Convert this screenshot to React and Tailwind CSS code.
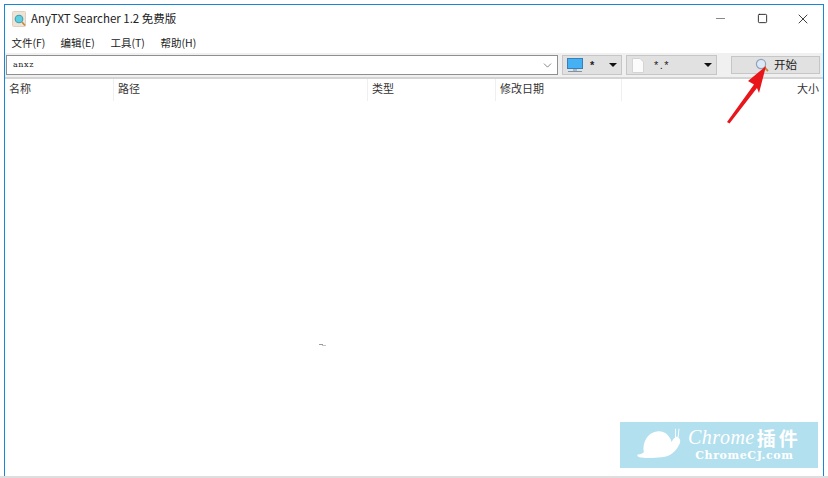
import React from "react";
import { ChevronDown, Square, X } from "lucide-react";

const cjk = "font-['Noto_Sans_CJK_SC','Noto_Sans',sans-serif]";

const menus = [
  { label: "文件(F)", width: "w-[49px]" },
  { label: "编辑(E)", width: "w-[50px]" },
  { label: "工具(T)", width: "w-[50px]" },
  { label: "帮助(H)", width: "w-[60px]" },
];

const columns = [
  { label: "名称", width: "w-[109px]", align: "" },
  { label: "路径", width: "w-[254px]", align: "" },
  { label: "类型", width: "w-[128px]", align: "" },
  { label: "修改日期", width: "w-[126px]", align: "" },
  { label: "大小", width: "flex-1", align: "text-right" },
];

function AppIcon() {
  return (
    <svg width="15" height="16" viewBox="0 0 15 16" className="shrink-0">
      <rect x="0.5" y="0.5" width="13" height="15" rx="1" fill="#efe3d6" stroke="#e0d0bf" />
      <circle cx="7" cy="8" r="3.8" fill="#5cd0e0" stroke="#3f9db5" strokeWidth="1.1" />
      <path d="M10 11 L13 14.5" stroke="#c48a3c" strokeWidth="1.6" />
    </svg>
  );
}

function MonitorIcon() {
  return (
    <svg width="16" height="15" viewBox="0 0 16 15" className="shrink-0">
      <rect x="0.5" y="0.5" width="15" height="10" fill="#45b1f5" stroke="#3a7fb5" />
      <rect x="6" y="11" width="4" height="2" fill="#a9b8c4" />
      <rect x="1" y="13" width="14" height="1" fill="#7d93a6" />
    </svg>
  );
}

function PageIcon() {
  return (
    <svg width="12" height="15" viewBox="0 0 12 15" className="shrink-0">
      <path d="M0.5 0.5 H8 L11.5 4 V14.5 H0.5 Z" fill="#fbfbfb" stroke="#d4d4d4" />
    </svg>
  );
}

function Caret() {
  return (
    <svg width="8" height="4" viewBox="0 0 8 4" className="shrink-0">
      <path d="M0 0 H8 L4 4 Z" fill="#111" />
    </svg>
  );
}

function Watermark() {
  return (
    <div className="absolute left-[620px] top-[422px] flex h-[46px] w-[198px] items-start bg-[#b3e0ee] pt-[5px] text-white">
      <svg width="50" height="32" viewBox="0 0 50 36" className="ml-[14px] shrink-0">
        <path d="M1 31 C4 30 7 30 8 28 C6 18 12 6 23 5 C32 4 38 11 39 17 C40 15 41 13 43 12 L43 2 L44 2 L44 11 L46 11 L47 2 L48 2 L47 12 C50 14 49 18 47 21 C44 27 38 33 28 34 C18 35 8 35 3 34 C1 33.5 0 32 1 31 Z" fill="#fff" />
      </svg>
      <div className="ml-[4px] flex flex-col items-center">
        <div className="flex h-[20px] items-center text-[20px] leading-none">
          <span className="font-['Liberation_Serif',serif] italic tracking-[0.5px]">Chrome</span>
          <span className={`${cjk} ml-[2px] text-[19px] leading-[19px] font-bold tracking-[3px]`}>插件</span>
        </div>
        <span className="mt-[3px] font-['DejaVu_Serif',serif] text-[11px] leading-[12px] font-bold tracking-[0.6px]">
          ChromeCJ.com
        </span>
      </div>
    </div>
  );
}

export default function App() {
  return (
    <div className={`relative flex h-[478px] w-[828px] flex-col overflow-hidden bg-white pt-[4px] ${cjk} text-[#222]`}>
      <div className="ml-[4px] mr-[4px] flex min-h-0 flex-1 flex-col border-x-[1.5px] border-t-[1.5px] border-[#1a86d8]">
        {/* Title bar */}
        <div className="flex h-[27px] shrink-0 items-center pl-[7px]">
          <AppIcon />
          <span className="ml-[4px] text-[11.5px]">AnyTXT Searcher 1.2 免费版</span>
          <div className="ml-auto flex items-center text-[#222]">
            <div className="flex w-[44px] justify-center">
              <div className="h-[1.5px] w-[9px] bg-[#888]" />
            </div>
            <div className="flex w-[41px] justify-center">
              <Square size={11} strokeWidth={2} />
            </div>
            <div className="flex w-[40px] justify-center">
              <X size={16} strokeWidth={1.3} />
            </div>
          </div>
        </div>

        {/* Menu bar */}
        <div className="flex h-[21px] shrink-0 items-center pl-[6.5px] text-[10.5px]">
          {menus.map((menu) => (
            <span key={menu.label} className={menu.width}>
              {menu.label}
            </span>
          ))}
        </div>

        {/* Search toolbar */}
        <div className="flex h-[24px] shrink-0 items-center bg-[#f0f0f0] pl-[1px] pr-[3px]">
          <div className="flex h-[20px] w-[552px] items-center border border-[#8f8f8f] bg-white pl-[6px] pr-[3px]">
            <span className="font-['DejaVu_Serif',serif] text-[8px] tracking-[0.6px]">anxz</span>
            <ChevronDown size={13} strokeWidth={1.3} className="ml-auto text-[#555]" />
          </div>
          <div className="ml-[4px] flex h-[20px] w-[60px] items-center border border-[#c6c6c6] bg-[#e1e1e1] pl-[4px] pr-[4px]">
            <MonitorIcon />
            <span className="ml-[7px] font-['Liberation_Sans',sans-serif] text-[11px] font-bold">*</span>
            <span className="ml-auto">
              <Caret />
            </span>
          </div>
          <div className="ml-[4px] flex h-[20px] w-[91px] items-center border border-[#c6c6c6] bg-[#e1e1e1] pl-[5px] pr-[4px]">
            <PageIcon />
            <span className="ml-[10px] font-['Liberation_Sans',sans-serif] text-[11px] tracking-[1.5px]">*.*</span>
            <span className="ml-auto">
              <Caret />
            </span>
          </div>
          <div className="ml-auto flex h-[18px] w-[89px] items-center border border-[#c6c6c6] bg-[#e1e1e1] pl-[23px]">
            <svg width="14" height="14" viewBox="0 0 14 14" className="shrink-0">
              <circle cx="6" cy="6" r="4.6" fill="#dce8f4" stroke="#8ea4bd" strokeWidth="1.2" />
              <path d="M9.5 9.5 L13 13" stroke="#c48a3c" strokeWidth="1.8" />
            </svg>
            <span className="ml-[5px] text-[11.5px]">开始</span>
          </div>
        </div>

        {/* Results list */}
        <div className="min-h-0 flex-1 border-t-2 border-[#d4d4d4] bg-white">
          <div className="flex h-[22px] text-[11px] text-[#333]">
            {columns.map((col) => (
              <div
                key={col.label}
                className={`${col.width} ${col.align} border-r border-[#efefef] pl-[4px] pr-[4px] pt-[1px] leading-[17px] last:border-r-0`}
              >
                {col.label}
              </div>
            ))}
          </div>
        </div>
      </div>
      <div className="h-[2px] shrink-0 bg-[#dedede]" />

      {/* Stray cursor mark */}
      <div className="absolute left-[319px] top-[344px] h-[1px] w-[4px] bg-[#9a9a9a]" />
      <div className="absolute left-[322px] top-[345px] h-[1px] w-[4px] bg-[#c4c4c4]" />

      {/* Red annotation arrow */}
      <svg width="60" height="70" viewBox="0 0 60 70" className="absolute left-[720px] top-[60px]">
        <path d="M46 6 L28 21 L34 24.5 L7 62 L9.5 63.5 L37 28 L39 33 Z" fill="#e8151b" />
      </svg>

      <Watermark />
    </div>
  );
}
